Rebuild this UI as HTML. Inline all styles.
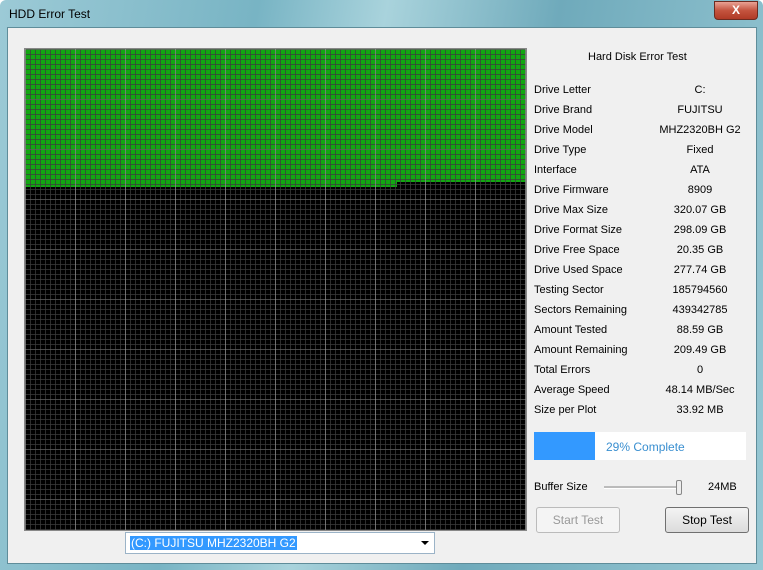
<!DOCTYPE html>
<html><head><style>
body{margin:0;width:763px;height:570px;overflow:hidden;font-family:"Liberation Sans",sans-serif;font-size:11px;color:#000}
.frame{position:absolute;left:0;top:0;width:763px;height:570px;background:linear-gradient(100deg,#9ccad6 0%,#78b4c4 30%,#a9d3dc 45%,#6faabb 65%,#98c8d4 100%);border-radius:6px 6px 0 0}
.title{position:absolute;left:9px;top:7px;font-size:12px;color:#000}
.close{position:absolute;left:714px;top:1px;width:42px;height:17px;background:linear-gradient(#e9a294,#c4543f 50%,#b03a26);border:1px solid #6d2b20;border-radius:0 0 4px 4px;color:#fff;font-weight:bold;font-size:12px;text-align:center;line-height:17px}
.body{position:absolute;left:7px;top:27px;width:748px;height:535px;background:#f0f0f0;border:1px solid #5f8d9a}
.plot{position:absolute;left:24px;top:48px;width:503px;height:483px;background:#000;border:1px solid #888;box-sizing:border-box;overflow:hidden}
.g{position:absolute;left:0;top:0;background:#12a612}
.grid{position:absolute;left:0;top:0;right:0;bottom:0;background:
linear-gradient(90deg,rgba(190,190,190,.45) 1px,transparent 1px) 0 0/50px 50px,
linear-gradient(rgba(190,190,190,.2) 1px,transparent 1px) 0 0/50px 50px,
linear-gradient(90deg,rgba(60,60,60,.75) 1px,transparent 1px) 0 0/5px 5px,
linear-gradient(rgba(60,60,60,.75) 1px,transparent 1px) 0 0/5px 5px}
.lbl{position:absolute;left:534px}
.val{position:absolute;left:640px;width:120px;text-align:center}
.prog{position:absolute;left:534px;top:432px;width:212px;height:28px;background:#fff}
.prog .b{position:absolute;left:0;top:0;width:61px;height:28px;background:#3399ff}
.prog span{position:absolute;left:72px;top:8px;color:#3a8fd0;font-size:12px}
.btn{position:absolute;top:507px;width:82px;height:24px;border:1px solid #707070;border-radius:3px;background:linear-gradient(#f4f4f4,#dcdcdc);text-align:center;line-height:24px;font-size:12px}
.combo{position:absolute;left:125px;top:532px;width:308px;height:20px;border:1px solid #9bb3c7;background:#fff}
.combo span{position:absolute;left:4px;top:3px;background:#3399ff;color:#fff;font-size:12px;padding:0 1px}
</style></head><body>
<div class="frame"></div>
<div class="title">HDD Error Test</div>
<div class="close">X</div>
<div class="body"></div>
<div class="plot">
<div class="g" style="width:503px;height:133px"></div>
<div class="g" style="width:372px;height:138px"></div>
<div class="grid"></div>
</div>
<div style="position:absolute;left:588px;top:51px;font-size:11px">Hard Disk Error Test</div>
<div class="lbl" style="top:84px">Drive Letter</div><div class="val" style="top:84px">C:</div>
<div class="lbl" style="top:104px">Drive Brand</div><div class="val" style="top:104px">FUJITSU</div>
<div class="lbl" style="top:124px">Drive Model</div><div class="val" style="top:124px">MHZ2320BH G2</div>
<div class="lbl" style="top:144px">Drive Type</div><div class="val" style="top:144px">Fixed</div>
<div class="lbl" style="top:164px">Interface</div><div class="val" style="top:164px">ATA</div>
<div class="lbl" style="top:184px">Drive Firmware</div><div class="val" style="top:184px">8909</div>
<div class="lbl" style="top:204px">Drive Max Size</div><div class="val" style="top:204px">320.07 GB</div>
<div class="lbl" style="top:224px">Drive Format Size</div><div class="val" style="top:224px">298.09 GB</div>
<div class="lbl" style="top:244px">Drive Free Space</div><div class="val" style="top:244px">20.35 GB</div>
<div class="lbl" style="top:264px">Drive Used Space</div><div class="val" style="top:264px">277.74 GB</div>
<div class="lbl" style="top:284px">Testing Sector</div><div class="val" style="top:284px">185794560</div>
<div class="lbl" style="top:304px">Sectors Remaining</div><div class="val" style="top:304px">439342785</div>
<div class="lbl" style="top:324px">Amount Tested</div><div class="val" style="top:324px">88.59 GB</div>
<div class="lbl" style="top:344px">Amount Remaining</div><div class="val" style="top:344px">209.49 GB</div>
<div class="lbl" style="top:364px">Total Errors</div><div class="val" style="top:364px">0</div>
<div class="lbl" style="top:384px">Average Speed</div><div class="val" style="top:384px">48.14 MB/Sec</div>
<div class="lbl" style="top:404px">Size per Plot</div><div class="val" style="top:404px">33.92 MB</div>
<div class="prog"><div class="b"></div><span>29% Complete</span></div>
<div class="lbl" style="top:481px">Buffer Size</div>
<div style="position:absolute;left:604px;top:486px;width:78px;height:2px;background:#bbb;border-bottom:1px solid #fff"></div>
<div style="position:absolute;left:676px;top:480px;width:4px;height:13px;border:1px solid #888;background:#eee;border-radius:2px"></div>
<div style="position:absolute;left:708px;top:481px">24MB</div>
<div class="btn" style="left:536px;color:#999;border-color:#bbb;background:#f4f4f4">Start Test</div>
<div class="btn" style="left:665px">Stop Test</div>
<div class="combo"><span>(C:) FUJITSU MHZ2320BH G2</span><div style="position:absolute;right:5px;top:8px;border:4px solid transparent;border-top:4px solid #000;border-bottom:0"></div></div>
</body></html>
